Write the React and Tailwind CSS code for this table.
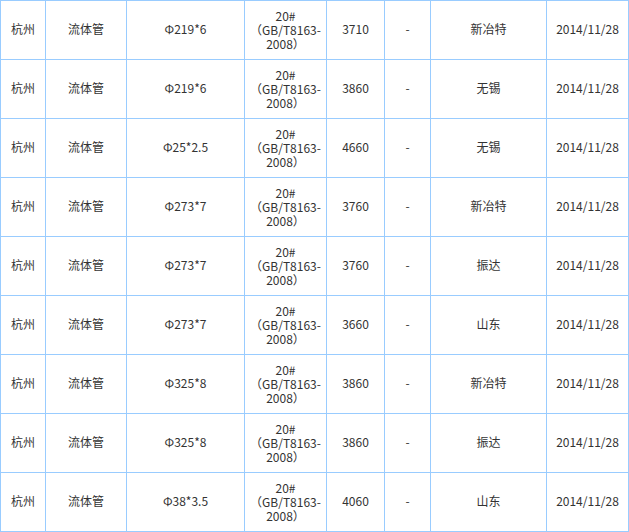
import React from "react";

const rows = [
  { spec: "Φ219*6", price: "3710", factory: "新冶特" },
  { spec: "Φ219*6", price: "3860", factory: "无锡" },
  { spec: "Φ25*2.5", price: "4660", factory: "无锡" },
  { spec: "Φ273*7", price: "3760", factory: "新冶特" },
  { spec: "Φ273*7", price: "3760", factory: "振达" },
  { spec: "Φ273*7", price: "3660", factory: "山东" },
  { spec: "Φ325*8", price: "3860", factory: "新冶特" },
  { spec: "Φ325*8", price: "3860", factory: "振达" },
  { spec: "Φ38*3.5", price: "4060", factory: "山东" },
];

const Cell = ({ children }) => (
  <div className="bg-white h-[58px] pb-[2px] flex items-center justify-center text-center">
    {children}
  </div>
);

const App = () => {
  return (
    <div
      className="w-[629px] h-[532px] bg-white text-[12px] leading-[14px] text-[#333]"
      style={{ fontFamily: "SimSun, 'Noto Sans CJK SC', sans-serif" }}
    >
      <div className="grid grid-cols-[44px_80px_117px_81px_57px_45px_115px_81px] gap-px p-px bg-[#99ccff]">
        {rows.map((r, i) => (
          <React.Fragment key={i}>
            <Cell>杭州</Cell>
            <Cell>流体管</Cell>
            <Cell>{r.spec}</Cell>
            <Cell>
              {/* standard no. wraps over three lines */}
              <div className="flex flex-col items-center pt-[2px]">
                <span>20#</span>
                <span className="flex">
                  <span className="inline-block w-[12px] text-right">（</span>
                  GB/T8163-
                </span>
                <span className="flex">
                  2008
                  <span className="inline-block w-[12px] text-left">）</span>
                </span>
              </div>
            </Cell>
            <Cell>{r.price}</Cell>
            <Cell>-</Cell>
            <Cell>{r.factory}</Cell>
            <Cell>2014/11/28</Cell>
          </React.Fragment>
        ))}
      </div>
    </div>
  );
};

export default App;
